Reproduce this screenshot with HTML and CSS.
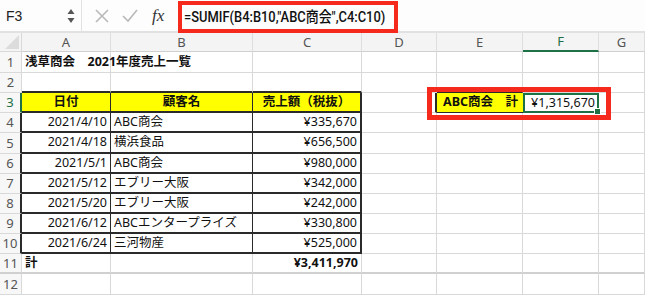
FILE: index.html
```html
<!DOCTYPE html>
<html lang="ja">
<head>
  <meta charset="UTF-8" />
  <title>SUMIF</title>
  <link rel="stylesheet" href="styles.css">
</head>
<body>
  <div class="toolbar">
    <div class="name-box">
      <span>F3</span>
      <svg class="spin" width="8" height="16" viewBox="0 0 8 16">
        <path d="M4 1 L7.5 6 L0.5 6 Z" fill="#555"/>
        <path d="M4 15 L7.5 10 L0.5 10 Z" fill="#555"/>
      </svg>
    </div>
    <div class="formula-btns">
      <svg width="14" height="14" viewBox="0 0 14 14"><path d="M1 1 L13 13 M13 1 L1 13" stroke="#b9b9b9" stroke-width="1.6" fill="none"/></svg>
      <svg width="16" height="14" viewBox="0 0 16 14"><path d="M1 7 L6 12 L15 1" stroke="#b9b9b9" stroke-width="1.6" fill="none"/></svg>
      <span class="fx">fx</span>
    </div>
    <div class="formula"><span class="formula-text">=SUMIF(B4:B10,"ABC商会",C4:C10)</span></div>
  </div>

  <div class="sheet">
    <!-- 列見出し -->
    <div class="hd corner"></div>
    <div class="hd col">A</div>
    <div class="hd col">B</div>
    <div class="hd col">C</div>
    <div class="hd col">D</div>
    <div class="hd col">E</div>
    <div class="hd col sel-col">F</div>
    <div class="hd col">G</div>

    <!-- 1 -->
    <div class="hd row">1</div>
    <div class="c b title">浅草商会　2021年度売上一覧</div>
    <div class="c"></div><div class="c"></div><div class="c"></div><div class="c"></div><div class="c"></div><div class="c"></div>

    <!-- 2 -->
    <div class="hd row">2</div>
    <div class="c dk-b"></div><div class="c dk-b"></div><div class="c dk-b"></div>
    <div class="c"></div><div class="c dk-b"></div><div class="c"></div><div class="c"></div>

    <!-- 3 -->
    <div class="hd row sel-row">3</div>
    <div class="c t th">日付</div>
    <div class="c t th">顧客名</div>
    <div class="c t th t-end">売上額（税抜）</div>
    <div class="c dk-r"></div>
    <div class="c yellow b label">ABC商会　計</div>
    <div class="c active r">¥1,315,670<span class="handle"></span></div>
    <div class="c"></div>

    <!-- 4 -->
    <div class="hd row dk-r">4</div>
    <div class="c t r">2021/4/10</div>
    <div class="c t">ABC商会</div>
    <div class="c t t-end r">¥335,670</div>
    <div class="c"></div><div class="c"></div><div class="c"></div><div class="c"></div>

    <!-- 5 -->
    <div class="hd row dk-r">5</div>
    <div class="c t r">2021/4/18</div>
    <div class="c t">横浜食品</div>
    <div class="c t t-end r">¥656,500</div>
    <div class="c"></div><div class="c"></div><div class="c"></div><div class="c"></div>

    <!-- 6 -->
    <div class="hd row dk-r">6</div>
    <div class="c t r">2021/5/1</div>
    <div class="c t">ABC商会</div>
    <div class="c t t-end r">¥980,000</div>
    <div class="c"></div><div class="c"></div><div class="c"></div><div class="c"></div>

    <!-- 7 -->
    <div class="hd row dk-r">7</div>
    <div class="c t r">2021/5/12</div>
    <div class="c t">エブリー大阪</div>
    <div class="c t t-end r">¥342,000</div>
    <div class="c"></div><div class="c"></div><div class="c"></div><div class="c"></div>

    <!-- 8 -->
    <div class="hd row dk-r">8</div>
    <div class="c t r">2021/5/20</div>
    <div class="c t">エブリー大阪</div>
    <div class="c t t-end r">¥242,000</div>
    <div class="c"></div><div class="c"></div><div class="c"></div><div class="c"></div>

    <!-- 9 -->
    <div class="hd row dk-r">9</div>
    <div class="c t r">2021/6/12</div>
    <div class="c t">ABCエンタープライズ</div>
    <div class="c t t-end r">¥330,800</div>
    <div class="c"></div><div class="c"></div><div class="c"></div><div class="c"></div>

    <!-- 10 -->
    <div class="hd row dk-r">10</div>
    <div class="c t r">2021/6/24</div>
    <div class="c t">三河物産</div>
    <div class="c t t-end r">¥525,000</div>
    <div class="c"></div><div class="c"></div><div class="c"></div><div class="c"></div>

    <!-- 11 -->
    <div class="hd row thick">11</div>
    <div class="c b thick">計</div>
    <div class="c thick"></div>
    <div class="c b r thick">¥3,411,970</div>
    <div class="c thick"></div><div class="c thick"></div><div class="c thick"></div><div class="c thick"></div>

    <!-- 12 -->
    <div class="hd row">12</div>
    <div class="c"></div><div class="c"></div><div class="c"></div><div class="c"></div><div class="c"></div><div class="c"></div><div class="c"></div>
  </div>

  <!-- 赤枠 -->
  <div class="mark mark-formula"></div>
  <div class="mark mark-cell"></div>
</body>
</html>
```

FILE: styles.css
```css
body {
  margin: 0;
  width: 645px;
  height: 295px;
  overflow: hidden;
  background: #fff;
  font-family: "Noto Sans", "Noto Sans CJK JP", sans-serif;
  color: #111;
  position: relative;
}

/* 数式バー */
.toolbar {
  display: flex;
  height: 31px;
  border-bottom: 2px solid #e1e1e1;
  background: #fdfdfd;
}

.name-box {
  width: 82px;
  display: flex;
  align-items: center;
  justify-content: space-between;
  padding: 0 6px 0 6px;
  box-sizing: border-box;
  font-family: "Liberation Sans", sans-serif;
  font-size: 14px;
  color: #222;
  border-right: 1px solid #e2e2e2;
}

.formula-btns {
  width: 96px;
  display: flex;
  align-items: center;
  gap: 13px;
  padding-left: 13px;
  box-sizing: border-box;
}

.fx {
  font-family: "Liberation Serif", serif;
  font-style: italic;
  font-size: 17px;
  color: #333;
  margin-left: 1px;
}

.formula {
  flex: 1;
  display: flex;
  align-items: center;
  padding-left: 6px;
  font-family: Roboto, "Noto Sans CJK JP", sans-serif;
  font-size: 15px;
  font-weight: 500;
  color: #111;
}

/* 元画像が横に詰まっているので合わせる */
.formula-text {
  display: inline-block;
  white-space: nowrap;
  transform: scaleX(0.86);
  transform-origin: left center;
}

/* シート */
.sheet {
  display: grid;
  grid-template-columns: 22px 89px 142px 109px 75px 86px 76px 1fr;
  grid-template-rows: 19px 21px 20px 20px 20px 21px 20px 20px 20px 20px 20px 20px 21px;
}

.sheet > div {
  box-sizing: border-box;
  border-right: 1px solid #d9d9d9;
  border-bottom: 1px solid #d9d9d9;
  display: flex;
  align-items: center;
  white-space: nowrap;
  line-height: 1;
  font-size: 12.5px;
}

.hd {
  background: #f4f4f4;
  color: #555;
  justify-content: center;
}

.sheet .hd {
  font-size: 13px;
}

.hd.col {
  border-right-color: #dedede;
  border-bottom-color: #cfcfcf;
}

.hd.row {
  background: #f7f7f7;
}

.corner {
  position: relative;
}

.corner::after {
  content: "";
  position: absolute;
  right: 2px;
  bottom: 2px;
  border-left: 14px solid transparent;
  border-bottom: 14px solid #dcdcdc;
}

.sel-col {
  color: #1e7145;
  border-bottom: 2px solid #1e7145 !important;
}

.sel-row {
  color: #1e7145;
  border-right: 2px solid #1e7145 !important;
}

.c {
  padding: 0 3px;
}

.b {
  font-weight: bold;
}

.r {
  justify-content: flex-end;
}

/* 表の罫線 */
.sheet .t {
  border-bottom: 2px solid #2a2a2a;
  border-right: 1px solid #2a2a2a;
}

.sheet .t-end {
  border-right: 2px solid #2a2a2a;
}

.sheet .dk-b {
  border-bottom: 2px solid #2a2a2a;
}

.sheet .dk-r {
  border-right: 2px solid #2a2a2a;
}

.th {
  background: #ffff00;
  font-weight: bold;
  justify-content: center;
}

.sheet .yellow {
  background: #ffff00;
  border-bottom: 1px solid #2a2a2a;
  border-right: none;
}

.label {
  padding-left: 6px;
}

.sheet .active {
  position: relative;
  border: 2px solid #1e7145;
  padding-right: 2px;
}

.handle {
  position: absolute;
  right: -4px;
  bottom: -4px;
  width: 5px;
  height: 5px;
  background: #1e7145;
  border: 1px solid #fff;
}

.sheet .thick {
  border-bottom: 2px solid #d0d0d0;
}

/* 赤枠 */
.mark {
  position: absolute;
  border: 4px solid #f52a1c;
  box-sizing: border-box;
}

.mark-formula {
  left: 178px;
  top: 1px;
  width: 220px;
  height: 32px;
}

.mark-cell {
  left: 427px;
  top: 87px;
  width: 184px;
  height: 33px;
  border-width: 5px;
}
```
